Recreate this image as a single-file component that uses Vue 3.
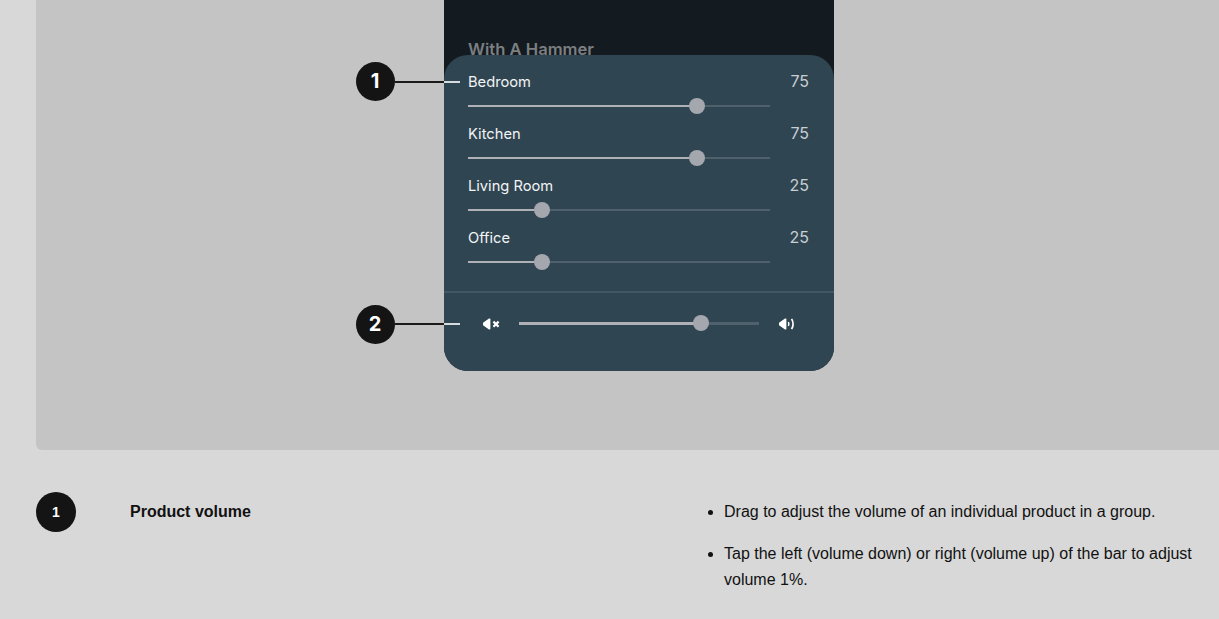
<script setup>
const rooms = [
  { name: 'Bedroom', volume: 75, pos: 229 },
  { name: 'Kitchen', volume: 75, pos: 229 },
  { name: 'Living Room', volume: 25, pos: 74 },
  { name: 'Office', volume: 25, pos: 74 },
]
</script>

<template>
  <div class="page">
    <section class="stage">
      <div class="phone">
        <div class="now-playing">With A Hammer</div>
        <div class="sheet">
          <div v-for="room in rooms" :key="room.name" class="room">
            <div class="room-head">
              <span class="room-name">{{ room.name }}</span>
              <span class="room-volume">{{ room.volume }}</span>
            </div>
            <div class="slider">
              <div class="fill" :style="{ width: room.pos + 'px' }"></div>
              <div class="thumb" :style="{ left: room.pos - 8 + 'px' }"></div>
            </div>
          </div>
          <div class="group">
            <svg class="icon" width="20" height="20" viewBox="0 0 20 20" aria-hidden="true">
              <path d="M2 9.2 Q2 8.8 2.4 8.5 L8 4.6 Q9.4 3.9 9.4 5.4 V14.6 Q9.4 16.1 8 15.4 L2.4 11.5 Q2 11.2 2 10.8 Z" fill="#fff" />
              <path d="M12.4 7.6 L17.6 12.8 M17.6 7.6 L12.4 12.8" stroke="#fff" stroke-width="2.2" fill="none" />
            </svg>
            <div class="slider group-slider">
              <div class="fill" style="width: 182px"></div>
              <div class="thumb" style="left: 174px"></div>
            </div>
            <svg class="icon" width="20" height="20" viewBox="0 0 20 20" aria-hidden="true">
              <path d="M2 9.2 Q2 8.8 2.4 8.5 L8 4.6 Q9.4 3.9 9.4 5.4 V14.6 Q9.4 16.1 8 15.4 L2.4 11.5 Q2 11.2 2 10.8 Z" fill="#fff" />
              <path d="M11.4 8 Q12.4 10 11.4 12" stroke="#fff" stroke-width="1.5" fill="none" />
              <path d="M14.6 4.8 Q17.6 10 14.6 15.2" stroke="#fff" stroke-width="1.7" fill="none" />
            </svg>
          </div>
        </div>
      </div>
      <div class="callout callout-one">
        <span class="dot">1</span><span class="lead"></span>
      </div>
      <div class="callout callout-two">
        <span class="dot">2</span><span class="lead"></span>
      </div>
    </section>

    <section class="detail">
      <span class="badge">1</span>
      <h3 class="detail-title">Product volume</h3>
      <ul class="detail-list">
        <li>Drag to adjust the volume of an individual product in a group.</li>
        <li>Tap the left (volume down) or right (volume up) of the bar to adjust volume 1%.</li>
      </ul>
    </section>
  </div>
</template>

<style>
html,
body {
  margin: 0;
  overflow: hidden;
  background: #d8d8d8;
}
</style>

<style scoped>
.page {
  height: 619px;
  overflow: hidden;
  background: #d8d8d8;
  font-family: "Liberation Sans", Arial, sans-serif;
  color: #111;
}

.stage {
  position: relative;
  height: 450px;
  margin-left: 36px;
  padding-left: 408px;
  box-sizing: border-box;
  background: #c4c4c4;
  border-bottom-left-radius: 6px;
}

.phone {
  width: 390px;
  height: 371px;
  background: #141b20;
  border-radius: 0 0 24px 24px;
  font-family: Inter, sans-serif;
}

.now-playing {
  height: 55px;
  padding: 38px 0 0 24px;
  box-sizing: border-box;
  color: #7b7f82;
  font-size: 16.6px;
  font-weight: 600;
  line-height: 22px;
  white-space: nowrap;
}

.sheet {
  position: relative;
  height: 316px;
  padding: 0 0 0 24px;
  box-sizing: border-box;
  background: #304552;
  border-radius: 24px;
}

.room {
  height: 52px;
  padding-top: 14px;
  box-sizing: border-box;
}

.room-head {
  display: flex;
  justify-content: space-between;
  padding-right: 25px;
  height: 26px;
  line-height: 26px;
}

.room-name {
  color: #f2f4f5;
  font-size: 14.7px;
}

.room-volume {
  color: #c9ced2;
  font-size: 16px;
  line-height: 25px;
}

.slider {
  position: relative;
  width: 302px;
  height: 2px;
  margin-top: 10px;
  background: #4f616c;
}

.fill {
  height: 100%;
  background: #aeb1b6;
}

.thumb {
  position: absolute;
  top: -7px;
  width: 16px;
  height: 16px;
  border-radius: 50%;
  background: #a4a7ad;
}

.group {
  display: flex;
  align-items: center;
  height: 63px;
  margin: 28px 0 0 -24px;
  padding-left: 37px;
  border-top: 2px solid #435764;
  box-sizing: border-box;
}

.group-slider {
  width: 240px;
  height: 3px;
  margin: 0 18px;
}

.icon {
  display: block;
  flex: none;
}

.callout {
  position: absolute;
  left: 320px;
  display: flex;
  align-items: center;
}

.callout-one {
  top: 62px;
}

.callout-two {
  top: 305px;
}

.callout-two .lead {
  margin-top: -1px;
}

.dot {
  width: 39px;
  height: 39px;
  border-radius: 50%;
  background: #141414;
  color: #fff;
  font-family: Inter, sans-serif;
  font-size: 20px;
  font-weight: 700;
  line-height: 39px;
  text-align: center;
  text-indent: -1px;
}

.lead {
  width: 65px;
  height: 2px;
  background: linear-gradient(to right, #1a1a1a 49px, #d5dbe0 49px);
}

.detail {
  display: flex;
  align-items: flex-start;
  padding: 42px 0 0 36px;
}

.badge {
  flex: none;
  width: 40px;
  height: 40px;
  border-radius: 50%;
  background: #141414;
  color: #fff;
  font-size: 14px;
  font-weight: 700;
  line-height: 41px;
  text-align: center;
}

.detail-title {
  width: 576px;
  margin: 7px 0 0 54px;
  font-size: 16px;
  font-weight: 700;
  line-height: 26px;
}

.detail-list {
  width: 490px;
  margin: 7px 0 0;
  padding: 0 0 0 18px;
  font-size: 16px;
  line-height: 26px;
}

.detail-list li + li {
  margin-top: 16px;
}
</style>
